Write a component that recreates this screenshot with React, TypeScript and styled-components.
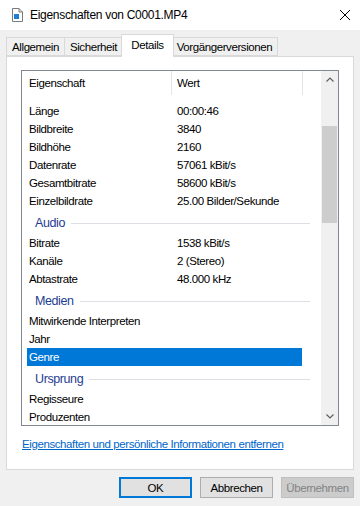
import { useLayoutEffect, useRef } from "react"
import styled, { createGlobalStyle } from "styled-components"

const GlobalStyle = createGlobalStyle`
    html, body {
        margin: 0;
        padding: 0;
    }
    body {
        width: 360px;
        height: 506px;
        overflow: hidden;
        background: #f0f0f0;
        font-family: "Liberation Sans", Arial, sans-serif;
        font-size: 11.5px;
        letter-spacing: -0.4px;
        color: #000;
    }
`

const Window = styled.div`
    width: 360px;
    height: 506px;
    display: flex;
    flex-direction: column;
    background: #f0f0f0;
`

const TitleBar = styled.div`
    height: 30px;
    flex: none;
    background: #fff;
    display: flex;
    align-items: center;
    padding: 0 10px 0 12px;
`

const Title = styled.div`
    margin-left: 7px;
    font-size: 12px;
    letter-spacing: -0.3px;
    flex: 1;
`

const TabStrip = styled.div`
    height: 26px;
    flex: none;
    display: flex;
    align-items: flex-end;
    padding-left: 6px;
    position: relative;
    z-index: 1;
`

const Tab = styled.div<{ $w: number; $active?: boolean }>`
    width: ${(p) => (p.$active ? p.$w + 4 : p.$w)}px;
    height: ${(p) => (p.$active ? 23 : 19)}px;
    margin: ${(p) => (p.$active ? "0 -2px -1px -2px" : "0 0 0 -1px")};
    box-sizing: border-box;
    border: 1px solid #d9d9d9;
    border-bottom: ${(p) => (p.$active ? "none" : "1px solid #d9d9d9")};
    background: ${(p) => (p.$active ? "#fff" : "#f0f0f0")};
    position: relative;
    z-index: ${(p) => (p.$active ? 2 : 1)};
    display: flex;
    align-items: center;
    justify-content: center;
    padding-bottom: ${(p) => (p.$active ? 2 : 0)}px;
    &:first-child {
        margin-left: 0;
    }
`

const Panel = styled.div`
    margin-left: 6px;
    width: 348px;
    height: 414px;
    box-sizing: border-box;
    border: 1px solid #d9d9d9;
    background: #fff;
    padding: 13px 0 0 14px;
    flex: none;
`

const ListView = styled.div`
    width: 318px;
    height: 356px;
    box-sizing: border-box;
    border: 1px solid #828790;
    display: flex;
    background: #fff;
`

const ListMain = styled.div`
    flex: 1;
    display: flex;
    flex-direction: column;
    min-width: 0;
`

const Header = styled.div`
    height: 24px;
    flex: none;
    display: flex;
`

const HeaderCell = styled.div<{ $w: number; $pad: number }>`
    width: ${(p) => p.$w}px;
    box-sizing: border-box;
    padding-left: ${(p) => p.$pad}px;
    border-right: 1px solid #e5e5e5;
    display: flex;
    align-items: center;
`

const Body = styled.div`
    flex: 1;
    overflow: hidden;
`

const GroupHeader = styled.div`
    height: 24px;
    width: 283px;
    margin-left: 5px;
    box-sizing: border-box;
    padding: 6px 0 0 8px;
    display: flex;
    gap: 6px;
    align-items: flex-start;
`

const GroupTitle = styled.span`
    font-size: 12.5px;
    line-height: 15px;
    color: #1e3c91;
`

const GroupLine = styled.div`
    flex: 1;
    height: 1px;
    margin-top: 7px;
    background: #dcdfe4;
`

const Row = styled.div<{ $selected?: boolean }>`
    height: 18px;
    width: 275px;
    margin-left: 5px;
    display: flex;
    line-height: 18px;
    background: ${(p) => (p.$selected ? "#0078d7" : "transparent")};
    color: ${(p) => (p.$selected ? "#fff" : "#000")};
    white-space: nowrap;
`

const NameCell = styled.div`
    width: 144px;
    flex: none;
    padding-left: 2px;
    box-sizing: border-box;
    overflow: hidden;
`

const ValueCell = styled.div`
    flex: 1;
    padding-left: 6px;
    overflow: hidden;
`

const ScrollBar = styled.div`
    width: 17px;
    flex: none;
    background: #f0f0f0;
    display: flex;
    flex-direction: column;
`

const ScrollButton = styled.div`
    height: 17px;
    flex: none;
    display: flex;
    align-items: center;
    justify-content: center;
`

const ScrollTrack = styled.div`
    flex: 1;
    padding: 38px 1px 0 1px;
`

const Thumb = styled.div`
    height: 97px;
    background: #cdcdcd;
`

const RemoveLink = styled.a`
    display: block;
    margin: 11px 0 0 1px;
    line-height: 14px;
    color: #0066cc;
    text-decoration: underline;
    cursor: pointer;
`

const ButtonRow = styled.div`
    display: flex;
    justify-content: flex-end;
    gap: 8px;
    padding: 7px 6px 0 0;
`

const Button = styled.button<{ $default?: boolean }>`
    width: 73px;
    height: 21px;
    box-sizing: border-box;
    font: inherit;
    letter-spacing: inherit;
    padding: 0;
    background: #e1e1e1;
    border: ${(p) => (p.$default ? "2px solid #0078d7" : "1px solid #adadad")};
    color: #000;
    &:disabled {
        background: #cccccc;
        border-color: #bfbfbf;
        color: #838383;
    }
`

const sections = [
    {
        title: "Video",
        rows: [
            ["Länge", "00:00:46"],
            ["Bildbreite", "3840"],
            ["Bildhöhe", "2160"],
            ["Datenrate", "57061 kBit/s"],
            ["Gesamtbitrate", "58600 kBit/s"],
            ["Einzelbildrate", "25.00 Bilder/Sekunde"],
        ],
    },
    {
        title: "Audio",
        rows: [
            ["Bitrate", "1538 kBit/s"],
            ["Kanäle", "2 (Stereo)"],
            ["Abtastrate", "48.000 kHz"],
        ],
    },
    {
        title: "Medien",
        rows: [
            ["Mitwirkende Interpreten", ""],
            ["Jahr", ""],
            ["Genre", ""],
        ],
    },
    {
        title: "Ursprung",
        rows: [
            ["Regisseure", ""],
            ["Produzenten", ""],
        ],
    },
]

const FileIcon = () => (
    <svg width="11" height="14" viewBox="0 0 11 14">
        <path d="M0.5 0.5 H7 L10.5 4 V13.5 H0.5 Z" fill="#fff" stroke="#7a7a7a" />
        <path d="M7 0.5 V4 H10.5" fill="none" stroke="#7a7a7a" />
        <rect x="2" y="6" width="5" height="5" fill="#1e7fd6" />
    </svg>
)

const CloseIcon = () => (
    <svg width="10" height="10" viewBox="0 0 10 10">
        <path d="M0 0 L10 10 M10 0 L0 10" stroke="#000" strokeWidth="1" />
    </svg>
)

const Chevron = ({ up }: { up?: boolean }) => (
    <svg width="8" height="5" viewBox="0 0 8 5">
        <path d={up ? "M0.5 4.5 L4 1 L7.5 4.5" : "M0.5 0.5 L4 4 L7.5 0.5"} fill="none" stroke="#606060" strokeWidth="1.2" />
    </svg>
)

const App = () => {
    const bodyRef = useRef<HTMLDivElement>(null)

    useLayoutEffect(() => {
        if (bodyRef.current) bodyRef.current.scrollTop = 17
    }, [])

    return (
        <Window>
            <GlobalStyle />
            <TitleBar>
                <FileIcon />
                <Title>Eigenschaften von C0001.MP4</Title>
                <CloseIcon />
            </TitleBar>
            <TabStrip>
                <Tab $w={59}>Allgemein</Tab>
                <Tab $w={59}>Sicherheit</Tab>
                <Tab $w={49} $active>
                    Details
                </Tab>
                <Tab $w={107}>Vorgängerversionen</Tab>
            </TabStrip>
            <Panel>
                <ListView>
                    <ListMain>
                        <Header>
                            <HeaderCell $w={150} $pad={7}>
                                Eigenschaft
                            </HeaderCell>
                            <HeaderCell $w={131} $pad={5}>
                                Wert
                            </HeaderCell>
                        </Header>
                        <Body ref={bodyRef}>
                            {sections.map((s) => (
                                <div key={s.title}>
                                    <GroupHeader>
                                        <GroupTitle>{s.title}</GroupTitle>
                                        <GroupLine />
                                    </GroupHeader>
                                    {s.rows.map(([name, value]) => (
                                        <Row key={name} $selected={name === "Genre"}>
                                            <NameCell>{name}</NameCell>
                                            <ValueCell>{value}</ValueCell>
                                        </Row>
                                    ))}
                                </div>
                            ))}
                        </Body>
                    </ListMain>
                    <ScrollBar>
                        <ScrollButton>
                            <Chevron up />
                        </ScrollButton>
                        <ScrollTrack>
                            <Thumb />
                        </ScrollTrack>
                        <ScrollButton>
                            <Chevron />
                        </ScrollButton>
                    </ScrollBar>
                </ListView>
                <RemoveLink>Eigenschaften und persönliche Informationen entfernen</RemoveLink>
            </Panel>
            <ButtonRow>
                <Button $default>OK</Button>
                <Button>Abbrechen</Button>
                <Button disabled>Übernehmen</Button>
            </ButtonRow>
        </Window>
    )
}

export default App
